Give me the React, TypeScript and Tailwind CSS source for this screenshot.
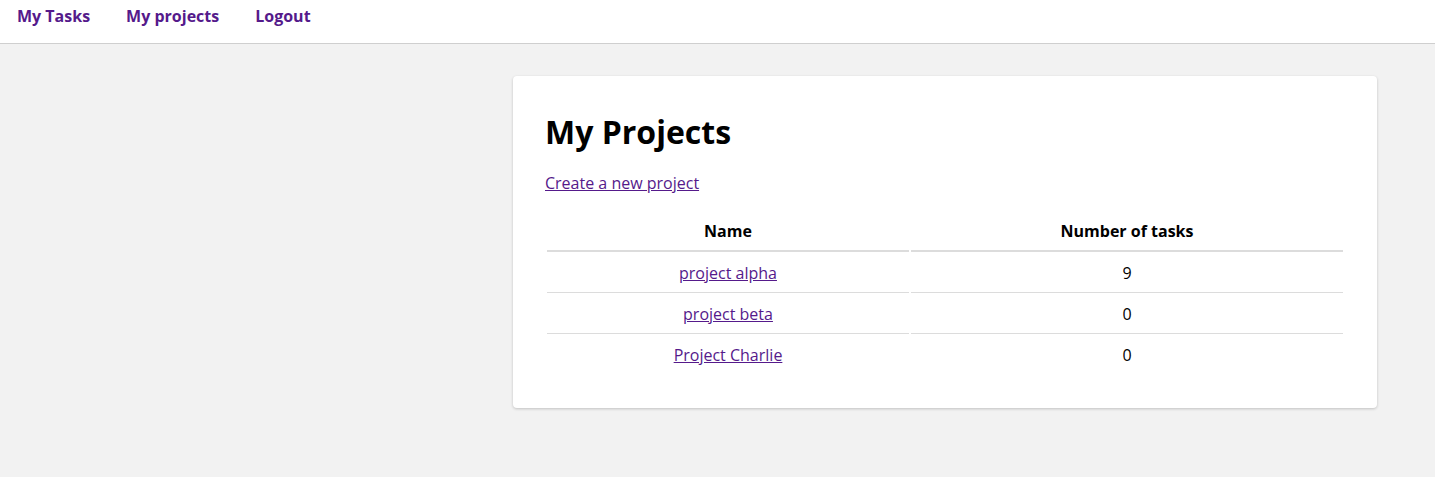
const projects = [
  { name: "project alpha", tasks: 9 },
  { name: "project beta", tasks: 0 },
  { name: "Project Charlie", tasks: 0 },
];

export default function App() {
  return (
    <div
      className="min-h-[477px] bg-[#f2f2f2] text-[16px] text-black"
      style={{ fontFamily: '"Open Sans", sans-serif' }}
    >
      <nav className="flex h-[44px] items-start gap-[36px] border-b border-[#cfcfcf] bg-white pl-[17px] pt-[4px]">
        <a href="#" className="font-bold leading-[24px] text-[#551a8b]">My Tasks</a>
        <a href="#" className="font-bold leading-[24px] text-[#551a8b]">My projects</a>
        <a href="#" className="font-bold leading-[24px] text-[#551a8b]">Logout</a>
      </nav>

      <div className="flex justify-end pr-[58px] pt-[32px]">
        <div className="w-[864px] rounded-[4px] bg-white p-[32px] shadow-[0_1px_3px_rgba(0,0,0,0.2)]">
          <h1 className="text-[32px] font-bold leading-[48px]">My Projects</h1>
          <a href="#" className="mt-[15px] block w-fit leading-[24px] text-[#551a8b] underline">
            Create a new project
          </a>
          <table className="mt-[15px] w-full border-separate border-spacing-[2px]">
            <thead>
              <tr>
                <th className="w-[362px] border-b-2 border-[#dcdcdc] py-[8px] font-bold leading-[22px]">Name</th>
                <th className="border-b-2 border-[#dcdcdc] py-[8px] font-bold leading-[22px]">Number of tasks</th>
              </tr>
            </thead>
            <tbody>
              {projects.map((p, i) => (
                <tr key={p.name}>
                  <td className={`py-[8px] text-center leading-[22px] ${i < projects.length - 1 ? "border-b border-[#dcdcdc]" : ""}`}>
                    <a href="#" className="text-[#551a8b] underline">{p.name}</a>
                  </td>
                  <td className={`py-[8px] text-center leading-[22px] ${i < projects.length - 1 ? "border-b border-[#dcdcdc]" : ""}`}>
                    {p.tasks}
                  </td>
                </tr>
              ))}
            </tbody>
          </table>
        </div>
      </div>
    </div>
  );
}
